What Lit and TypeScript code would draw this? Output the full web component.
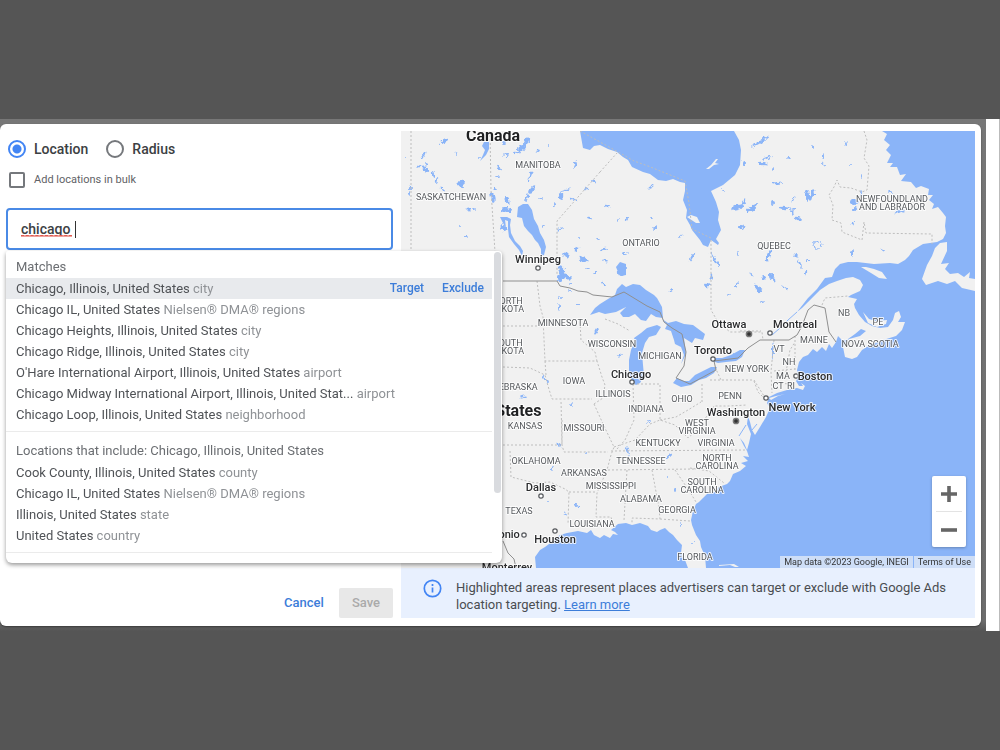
import { LitElement, html, svg, css } from "lit";
import { customElement, property, state } from "lit/decorators.js";
import { classMap } from "lit/directives/class-map.js";

type Place = { name: string; kind: string };
type Label = [string, number, number];
type Blob = [number, number, number, number, number];

const MATCHES: Place[] = [
  { name: "Chicago, Illinois, United States", kind: "city" },
  { name: "Chicago IL, United States", kind: "Nielsen® DMA® regions" },
  { name: "Chicago Heights, Illinois, United States", kind: "city" },
  { name: "Chicago Ridge, Illinois, United States", kind: "city" },
  { name: "O'Hare International Airport, Illinois, United States", kind: "airport" },
  { name: "Chicago Midway International Airport, Illinois, United Stat...", kind: "airport" },
  { name: "Chicago Loop, Illinois, United States", kind: "neighborhood" },
];

const INCLUDING: Place[] = [
  { name: "Cook County, Illinois, United States", kind: "county" },
  { name: "Chicago IL, United States", kind: "Nielsen® DMA® regions" },
  { name: "Illinois, United States", kind: "state" },
  { name: "United States", kind: "country" },
];

const REGIONS: Label[] = [
  ["SASKATCHEWAN", 451, 200], ["MANITOBA", 538, 168], ["ONTARIO", 641, 246],
  ["QUEBEC", 774, 249], ["NEWFOUNDLAND", 892, 202], ["AND LABRADOR", 892, 210],
  ["NORTH", 508, 304], ["DAKOTA", 507, 312], ["SOUTH", 508, 346], ["DAKOTA", 507, 354],
  ["MINNESOTA", 563, 326], ["WISCONSIN", 612, 347], ["MICHIGAN", 660, 359],
  ["IOWA", 574, 384], ["NEBRASKA", 515, 390], ["ILLINOIS", 613, 397],
  ["INDIANA", 646, 412], ["OHIO", 682, 402], ["KANSAS", 525, 429],
  ["MISSOURI", 584, 431], ["WEST", 697, 426], ["VIRGINIA", 697, 434],
  ["VIRGINIA", 716, 446], ["KENTUCKY", 658, 446], ["OKLAHOMA", 536, 464],
  ["TENNESSEE", 641, 464], ["NORTH", 717, 461], ["CAROLINA", 717, 469],
  ["ARKANSAS", 584, 476], ["MISSISSIPPI", 611, 489], ["SOUTH", 702, 485],
  ["CAROLINA", 702, 493], ["ALABAMA", 641, 502], ["GEORGIA", 677, 513],
  ["TEXAS", 519, 514], ["LOUISIANA", 592, 527], ["FLORIDA", 695, 560],
  ["NEW YORK", 747, 372], ["PENN", 730, 399], ["MAINE", 814, 343],
  ["NB", 844, 316], ["PE", 878, 325], ["NOVA SCOTIA", 870, 347],
  ["VT", 779, 352], ["NH", 789, 365], ["MA", 783, 379], ["CT", 778, 389], ["RI", 791, 389],
];

const CITIES: Label[] = [
  ["Winnipeg", 538, 263], ["Chicago", 631, 378], ["Ottawa", 729, 328],
  ["Montreal", 795, 328], ["Toronto", 713, 354], ["Boston", 815, 380],
  ["New York", 792, 411], ["Washington", 736, 416], ["Dallas", 541, 491],
  ["Houston", 555, 543], ["San Antonio", 490, 538], ["Monterrey", 507, 571],
];

const TOWNS: [number, number][] = [
  [538, 268], [632, 382], [770, 333], [713, 359], [796, 376],
  [766, 398], [541, 496], [555, 531], [524, 535],
];
const CAPITALS: [number, number][] = [[749, 334], [736, 421]];

const LAKES: Blob[] = [
  [444, 141, 5, 2, -25], [457, 153, 2, 1, 60], [420, 166, 1, 3, 60], [425, 169, 4, 2, 50],
  [426, 164, 2, 1, 10], [461, 183, 4, 2, -10], [437, 180, 1, 3, 10], [410, 193, 1, 2, 0],
  [411, 187, 1, 2, 20], [433, 174, 1, 3, -10], [462, 187, 2, 1, 20], [468, 209, 3, 1, 20],
  [474, 209, 2, 1, 0], [466, 237, 2, 1, 0], [461, 226, 1, 1, 0], [479, 157, 1, 1, 0],
  [406, 158, 1, 1, 0], [424, 155, 1, 3, 20], [442, 189, 3, 1, 15], [499, 168, 2, 1, 20],
  [522, 148, 5, 3, -50], [526, 142, 2, 5, 30], [517, 153, 4, 1, 10], [506, 155, 3, 1, 0],
  [504, 143, 2, 1, 0], [538, 150, 3, 1, 10], [548, 146, 1, 1, 0], [575, 165, 1, 4, 25],
  [530, 176, 1, 5, 25], [532, 190, 2, 4, 30], [527, 197, 1, 5, 15], [541, 198, 2, 1, 0],
  [565, 190, 5, 1, -15], [561, 196, 2, 3, 20], [573, 199, 4, 1, 30], [555, 205, 1, 2, 0],
  [493, 197, 2, 5, -20], [507, 200, 2, 3, -30], [506, 210, 5, 3, 10], [497, 177, 2, 1, 0],
  [495, 189, 2, 1, 10], [504, 228, 2, 4, -20], [587, 189, 2, 1, -20], [594, 182, 3, 1, 10],
  [590, 218, 3, 1, 10], [560, 229, 3, 1, -20], [579, 238, 1, 1, 0], [544, 226, 2, 1, 0],
  [566, 255, 3, 2, 30], [577, 249, 2, 3, 20], [583, 259, 5, 2, 30], [562, 272, 3, 7, -20],
  [567, 277, 4, 2, 30], [596, 272, 2, 1, 0], [587, 269, 2, 1, 0], [598, 240, 2, 1, 0],
  [622, 270, 4, 6, 10], [608, 206, 3, 1, 10], [618, 220, 1, 2, 0], [627, 219, 1, 2, 20],
  [651, 218, 2, 1, 0], [651, 187, 3, 1, -30], [655, 228, 2, 1, 0], [604, 249, 3, 1, -10],
  [605, 261, 3, 1, 20], [624, 253, 3, 1, 0], [681, 236, 3, 1, -30], [692, 257, 1, 6, 30],
  [714, 258, 1, 7, -25], [718, 264, 1, 3, 0], [744, 163, 2, 2, 0], [763, 164, 5, 2, 10],
  [767, 158, 5, 1, -20], [757, 144, 7, 1, -30], [764, 139, 5, 1, -30], [777, 183, 5, 1, -10],
  [738, 207, 7, 2, -15], [744, 202, 1, 4, 30], [752, 208, 7, 2, -30], [773, 203, 2, 2, 0],
  [784, 208, 6, 1, 5], [792, 212, 1, 4, -20], [741, 227, 3, 2, 0], [737, 253, 1, 2, 0],
  [769, 255, 2, 6, 25], [724, 190, 2, 1, 0], [773, 169, 1, 2, 0], [789, 158, 2, 1, 0],
  [796, 256, 3, 1, 20], [752, 275, 3, 1, 40], [764, 278, 3, 2, 60], [774, 280, 3, 1, 30],
  [810, 198, 5, 2, -30], [807, 196, 2, 6, 0], [813, 193, 2, 4, -10], [794, 209, 2, 1, 0],
  [798, 219, 3, 2, 20], [793, 200, 1, 3, 20], [846, 144, 1, 3, 0], [823, 156, 1, 3, 0],
  [824, 165, 2, 1, 20], [813, 147, 1, 2, 0], [854, 202, 4, 3, 10], [861, 194, 1, 3, 0],
  [862, 176, 1, 2, 0], [850, 165, 1, 1, 0], [853, 223, 2, 1, 20], [855, 209, 2, 2, 0],
  [898, 212, 5, 1, -30], [902, 211, 3, 1, 20], [883, 250, 2, 1, 30], [852, 254, 1, 4, 0],
  [800, 264, 1, 4, -20], [808, 260, 2, 1, 0], [806, 273, 1, 3, 10], [890, 192, 2, 1, 0],
  [560, 278, 3, 3, 20], [570, 291, 2, 1, 0], [558, 297, 1, 2, 0], [559, 307, 1, 3, 0],
  [578, 305, 2, 1, 0], [571, 283, 2, 1, 0], [604, 284, 2, 1, 20], [671, 291, 3, 1, -30],
  [707, 285, 3, 2, 20], [711, 277, 1, 3, 20], [758, 288, 2, 5, -40], [771, 276, 2, 3, 0],
  [785, 288, 4, 1, 30], [760, 291, 3, 2, 20], [737, 285, 1, 3, 0], [729, 295, 2, 1, 0],
  [762, 302, 2, 1, 0], [596, 331, 1, 3, 30], [620, 355, 3, 1, -20], [561, 298, 1, 1, 0],
  [545, 379, 1, 5, -30], [523, 397, 3, 1, -20], [572, 405, 1, 2, 0],
  [559, 444, 1, 3, -20], [586, 452, 1, 1, 0], [627, 450, 1, 6, -15], [669, 456, 4, 1, -30],
  [577, 505, 3, 1, 50], [566, 513, 2, 1, 30], [548, 501, 1, 1, 0], [553, 468, 1, 2, 0],
  [668, 478, 1, 1, 0], [675, 490, 1, 2, 0], [649, 422, 2, 1, 0], [681, 525, 1, 2, 0],
  [692, 544, 1, 1, 0], [734, 355, 1, 1, 0], [773, 351, 1, 9, 0],
];

const WATER: string[] = [
  // Hudson Bay and James Bay
  "M580 131 583 148 590 150 594 146 600 145 608 149 617 152 623 157 628 160 632 167 643 172 650 174 658 180 666 181 673 179 680 182 685 183 685 191 683 200 687 210 686 218 690 225 692 230 700 240 703 245 708 247 711 240 718 245 719 243 716 239 721 230 718 220 719 212 716 202 711 191 723 185 735 175 740 165 741 150 739 140 734 131Z",
  // Atlantic coast, Gulf of St. Lawrence and Gulf of Mexico
  "M882 131 887 134 884 140 890 145 886 150 891 155 887 163 893 163 890 167 897 167 900 175 906 174 901 181 911 182 916 188 921 186 929 189 928 195 933 195 929 200 934 204 932 209 938 207 943 213 946 217 945 226 946 233 943 239 937 242 923 244 913 250 909 256 905 260 898 264 890 263 874 264 857 262 848 262 840 264 835 269 832 277 825 278 817 289 808 298 797 312 802 308 808 302 820 290 829 284 837 281 846 278 853 277 860 280 863 285 860 291 851 295 848 297 857 299 854 304 855 308 859 315 865 322 872 326 880 328 888 327 893 320 895 313 899 311 901 317 898 322 905 322 902 330 896 336 880 341 870 345 862 350 857 357 852 359 845 357 843 347 849 339 860 336 866 331 861 329 855 334 848 339 843 341 838 336 836 342 832 348 829 344 826 351 822 347 817 352 813 349 808 355 803 357 799 362 797 370 799 377 796 381 799 386 803 386 801 383 805 386 803 390 797 388 787 390 777 393 769 397 767 403 770 408 766 417 760 427 755 435 752 430 750 422 748 416 747 424 751 434 749 443 747 450 744 443 740 438 744 446 747 451 749 457 743 456 748 461 741 463 746 466 740 471 733 474 730 481 727 484 719 487 715 492 708 493 703 498 699 502 696 504 693 511 691 520 692 525 696 535 700 541 701 547 705 556 706 568H975V131ZM688 568 685 560 681 553 682 545 677 540 673 535 669 532 665 528 660 530 657 532 651 530 648 526 640 523 632 525 626 523 618 524 611 530 615 532 618 535 613 534 610 538 604 535 600 538 594 535 591 530 587 533 578 531 567 533 560 535 553 541 545 547 540 550 535 557 536 568Z",
  // Lakes Superior, Michigan, Huron, Erie, Ontario
  "M590 315 595 308 600 304 608 299 615 295 617 289 622 284 626 287 633 284 640 285 646 290 654 295 657 298 662 307 663 318 656 317 651 314 646 321 641 320 635 314 629 317 623 317 620 313 626 307 616 312 605 314 599 312Z",
  "M647 328 641 333 634 338 635 341 631 350 629 360 629 372 632 382 636 385 640 383 644 376 643 365 642 353 645 343 649 337 656 335 661 327 657 325Z",
  "M662 319 667 325 665 329 671 331 674 340 675 344 681 347 684 355 681 364 686 354 684 338 692 343 695 338 703 340 705 334 697 328 693 325 684 324 676 321 668 323Z",
  "M673 383 677 378 684 381 689 381 695 375 703 371 711 367 717 367 714 373 706 378 699 380 691 385 681 387Z",
  "M712 361 716 358 722 358 731 355 740 350 745 350 742 357 736 361 726 362 718 363Z",
  // Lakes Winnipeg, Manitoba and Reindeer
  "M518 207 523 204 528 204 532 210 534 219 538 226 540 233 544 240 546 247 544 255 541 256 541 249 538 243 535 240 532 235 528 231 524 226 522 218 517 217Z",
  "M500 217 507 217 511 219 510 225 511 233 515 241 520 246 523 251 522 256 519 250 514 244 509 237 508 229 508 221 505 220 506 228 503 223Z",
  "M484 142 489 142 489 149 486 155 480 161 483 155 485 150 482 146Z",
  "M616 267 620 262 626 264 626 275 621 276 618 272Z",
];

const ISLANDS: string[] = [
  "M687 217 691 215 697 217 700 223 696 223Z",
  "M706 169 711 165 716 159 718 159 715 163 719 164 714 165 709 169Z",
  "M861 267 866 267 874 269 882 272 887 279 879 278 871 273Z",
  "M863 312 869 319 876 321 887 320 886 324 877 327 868 323Z",
  "M947 242 940 243 935 248 932 256 927 265 922 279 926 285 938 281 947 284 955 281 962 288 975 291 975 279 969 278 970 272 964 277 958 273 950 274 945 269 949 263 941 264 947 251Z",
  "M769 398 776 396 785 394 778 396 771 400Z",
  "M719 565 734 564 739 567 735 567 730 565 719 566Z",
];

const PROVINCES: string[] = [
  "M411 131V252M490 131 491 190 495 252",
  "M600 172 557 221V275",
  "M580 131 620 153 634 161 648 166 685 181 689 203 692 229 711 238V310L718 322 730 332 762 332 763 340",
  "M600 172 617 153",
  "M864 131 867 140 864 158 869 166 867 190 862 192 851 188 840 187 837 180 834 187 829 195 833 205 832 220 841 223 842 232 862 240 864 222 866 233 932 234 932 244",
  "M537 281 540 306 543 317 545 361H597L602 377 605 385 603 398 594 404M503 326H543M503 367 530 368 545 375 548 386 552 399H592M545 361 546 375",
  "M580 322 581 340 595 352 597 361M605 319 618 324 630 331M633 384H660V420M633 384 634 420 625 440 617 449M660 420 676 417 688 410 701 402M702 384V402M710 380H754L764 396",
  "M594 404 604 426 614 447 611 455 607 470 597 493 596 517H611L614 528M503 445H562L561 400M562 420V445L564 452H608M510 451 511 477 535 483 550 482 565 489 569 492 568 524M569 492H597",
  "M611 451 746 450M608 470 695 469M627 470 624 520M652 470 659 508 660 519 632 518V523M660 519 690 521M675 470 690 492 696 502M690 468 709 471 724 483M614 447 635 440 650 424 660 420 675 425 688 438 697 430 707 416 714 406 728 406 747 405",
  "M774 340 771 372 772 393M795 336V370M786 372 790 350 795 342M774 371 795 369M773 383 791 384M754 381 758 392 763 397M715 367 721 380M822 305 825 298 848 296M740 331H761",
];

const BORDER =
  "M503 281H557L560 286 570 288 578 291 587 292 593 295 612 297 624 292 647 306 660 312 664 322 672 328 682 334 686 352 684 366 676 378 690 384 703 377 716 370 714 361 738 358 748 348 760 340H789L797 335 802 326 808 310 814 305 825 308 829 332 836 342M503 541 508 553 514 559 516 568";

@customElement("coverage-map")
export class CoverageMap extends LitElement {
  static styles = css`
    :host { display: block; position: relative; overflow: hidden; background: #f1f1f1; }
    .canvas { display: block; width: 100%; height: 100%; }
    .water { fill: #8ab4f8; }
    .land { fill: #f1f1f1; }
    .line { fill: none; stroke: #bdbdbd; stroke-width: 1; stroke-dasharray: 2 2; }
    .border { fill: none; stroke: #8f8f8f; stroke-width: 1; stroke-linejoin: round; }
    .river { fill: none; stroke: #8ab4f8; stroke-width: 1; }
    .label { text-anchor: middle; paint-order: stroke; stroke: #fffc; stroke-width: 2px; stroke-linejoin: round; }
    .region { font: 400 9px Roboto, sans-serif; fill: #55585c; }
    .city { font: 500 11px Roboto, sans-serif; fill: #2b2c2e; }
    .country { font: 700 16px Roboto, sans-serif; fill: #1f2022; }
    .town { fill: #fff; stroke: #55585c; stroke-width: 1.2; }
    .capital { fill: #333; stroke: #777; stroke-width: 1.5; }
    .zoom {
      position: absolute; right: 9px; bottom: 21px; display: flex; flex-direction: column;
      width: 34px; background: #fff; border-radius: 2px; box-shadow: 0 1px 3px #0004;
    }
    .step { display: grid; place-items: center; height: 35px; padding: 0; border: 0; background: none; }
    .step svg { width: 16px; height: 16px; fill: #666; }
    .rule { height: 1px; margin: 0 4px; background: #e3e3e3; }
    .credits {
      position: absolute; right: 0; bottom: 0; display: flex; gap: 1px;
      font: 9px/12px Roboto, sans-serif; color: #333;
    }
    .credit { padding: 0 4px; background: #dfe8f6cc; color: inherit; text-decoration: none; }
  `;

  render() {
    return html`
      <svg class="canvas" viewBox="401 131 574 437" preserveAspectRatio="xMidYMid slice" role="img" aria-label="Map of eastern North America">
        <filter id="ragged">
          <feTurbulence type="fractalNoise" baseFrequency="0.25" numOctaves="2" seed="4"></feTurbulence>
          <feDisplacementMap in="SourceGraphic" scale="6" xChannelSelector="R" yChannelSelector="G"></feDisplacementMap>
        </filter>
        ${WATER.map((d) => svg`<path class="water" d=${d}></path>`)}
        ${ISLANDS.map((d) => svg`<path class="land" d=${d}></path>`)}
        <g filter="url(#ragged)">
          ${LAKES.map(([x, y, rx, ry, turn]) => svg`<ellipse class="water" cx=${x} cy=${y} rx=${rx} ry=${ry} transform=${`rotate(${turn} ${x} ${y})`}></ellipse>`)}
          <circle class="river" cx="818" cy="245" r="4"></circle>
        </g>
        <path class="river" d="M797 312 788 320 780 328 772 335M746 425 739 436M752 430 757 424"></path>
        ${PROVINCES.map((d) => svg`<path class="line" d=${d}></path>`)}
        <path class="border" d=${BORDER}></path>
        ${TOWNS.map(([x, y]) => svg`<circle class="town" cx=${x} cy=${y} r="2.2"></circle>`)}
        ${CAPITALS.map(([x, y]) => svg`<circle class="capital" cx=${x} cy=${y} r="2.6"></circle>`)}
        ${REGIONS.map(([t, x, y]) => svg`<text class="label region" x=${x} y=${y}>${t}</text>`)}
        ${CITIES.map(([t, x, y]) => svg`<text class="label city" x=${x} y=${y}>${t}</text>`)}
        <text class="label country" x="493" y="141">Canada</text>
        <text class="label country" x="493" y="416">United States</text>
      </svg>
      <div class="zoom">
        <button class="step" aria-label="Zoom in"><svg viewBox="0 0 16 16"><path d="M6.2 0h3.6v6.2H16v3.6H9.8V16H6.2V9.8H0V6.2h6.2z"></path></svg></button>
        <div class="rule"></div>
        <button class="step" aria-label="Zoom out"><svg viewBox="0 0 16 16"><path d="M0 6.2h16v3.6H0z"></path></svg></button>
      </div>
      <div class="credits">
        <span class="credit">Map data ©2023 Google, INEGI</span>
        <a class="credit" href="#terms">Terms of Use</a>
      </div>
    `;
  }
}

@customElement("place-list")
export class PlaceList extends LitElement {
  @property() heading = "";
  @property({ attribute: false }) places: Place[] = [];
  @property({ type: Number }) active = -1;

  static styles = css`
    :host { display: block; padding-bottom: 6px; border-bottom: 1px solid #ebebeb; }
    .heading { margin: 0; padding: 0 10px; font: 400 13px/23px Roboto, sans-serif; color: #6b6e72; }
    .items { margin: 0; padding: 0; list-style: none; font-size: 13px; }
    .item { display: flex; align-items: center; padding: 0 8px 0 10px; line-height: 21px; }
    .item.active { background: #e8eaed; }
    .name { flex: 1; white-space: nowrap; color: #505357; }
    .kind { color: #8f9296; }
    .action { margin-left: 18px; padding: 0; border: 0; background: none; font: 500 12px/21px Roboto, sans-serif; color: #3c7dd9; }
  `;

  render() {
    return html`
      <h3 class="heading">${this.heading}</h3>
      <ul class="items">
        ${this.places.map((p, i) => html`
          <li class=${classMap({ item: true, active: i === this.active })}>
            <span class="name">${p.name} <span class="kind">${p.kind}</span></span>
            ${i === this.active
              ? html`<button class="action">Target</button><button class="action">Exclude</button>`
              : null}
          </li>`)}
      </ul>
    `;
  }
}

@customElement("app-root")
export class AppRoot extends LitElement {
  @state() private query = "chicago ";

  static styles = css`
    :host {
      display: flex; flex-direction: column; justify-content: center; min-height: 100vh;
      background: #555; font: 12px/16px Roboto, sans-serif; color: #3c4043;
    }
    * { box-sizing: border-box; }
    .stage { display: flex; background: linear-gradient(#777, #6c6c6c 98%, #555); }
    .gutter { width: 14px; background: #fff; border-right: 1px solid #bbb; }
    .dialog {
      flex: 1; display: grid; grid-template-columns: minmax(0, 401fr) minmax(0, 574fr);
      margin: 5px 5px 5px 0; padding: 7px 6px 8px 0; background: #fff; border-radius: 6px;
      box-shadow: 0 1px 2px #0006;
    }
    .form { display: flex; flex-direction: column; padding: 0 8px 0 6px; }
    .modes { display: flex; gap: 16px; }
    .choice { display: flex; align-items: center; gap: 8px; height: 36px; padding-left: 2px; font-size: 14px; font-weight: 500; }
    .bulk { display: flex; align-items: center; gap: 9px; height: 26px; padding-left: 3px; font-size: 11px; color: #5f6266; }
    .radio, .tick { appearance: none; flex: none; margin: 0; background: #fff; border: 2px solid #75787c; }
    .radio { width: 18px; height: 18px; border-radius: 50%; }
    .radio:checked { border-color: #4285f4; background: radial-gradient(circle, #4285f4 4px, #fff 5px); }
    .tick { width: 16px; height: 16px; border-radius: 2px; }
    .search { position: relative; margin-top: 15px; }
    .query {
      display: block; width: 100%; height: 42px; padding: 0 13px; border: 2px solid #4a8ae6;
      border-radius: 4px; outline: 0; background: #fff; color: #3c4043;
      font: 500 14px/20px Roboto, sans-serif;
    }
    .squiggle { position: absolute; left: 15px; top: 27px; width: 51px; height: 2px; border-top: 1px dashed #e05a50; background: #eea29c; }
    .caret { position: absolute; left: 69px; top: 13px; width: 1px; height: 17px; background: #333; }
    .menu {
      position: absolute; z-index: 1; left: 0; top: 43px; display: flex; width: 496px; height: 312px;
      background: #fff; border-radius: 2px 4px 6px 6px; box-shadow: 0 2px 4px #0006;
    }
    .groups { flex: 1; display: flex; flex-direction: column; gap: 7px; padding-top: 4px; overflow: hidden; }
    .rail { width: 10px; padding: 1px 1px 0 2px; }
    .thumb { height: 241px; border-radius: 4px; background: #d9dbdf; }
    .actions { display: flex; justify-content: flex-end; gap: 15px; margin-top: auto; }
    .cancel, .save { height: 30px; border: 0; font: 500 13px/16px Roboto, sans-serif; }
    .cancel { padding: 0; background: none; color: #3c7dd9; }
    .save { padding: 0 13px; border-radius: 2px; background: #e8e8e8; color: #aaa; }
    .map { display: flex; flex-direction: column; }
    .chart { aspect-ratio: 574 / 437; }
    .notice { display: flex; gap: 14px; flex: 1; padding: 11px 24px 5px 22px; background: #e8f0fe; color: #4a4d51; }
    .info { flex: none; width: 19px; height: 19px; }
    .copy { margin: 0; font-size: 13px; line-height: 17px; }
    .more { color: #3c7dd9; }
  `;

  render() {
    return html`
      <main class="stage">
        <section class="dialog">
          <form class="form" @submit=${(e: Event) => e.preventDefault()}>
            <div class="modes">
              <label class="choice"><input class="radio" type="radio" name="mode" checked />Location</label>
              <label class="choice"><input class="radio" type="radio" name="mode" />Radius</label>
            </div>
            <label class="bulk"><input class="tick" type="checkbox" />Add locations in bulk</label>
            <div class="search">
              <input class="query" type="text" aria-label="Enter a location" .value=${this.query}
                @input=${(e: Event) => (this.query = (e.target as HTMLInputElement).value)} />
              <span class="squiggle"></span><span class="caret"></span>
              <div class="menu">
                <div class="groups">
                  <place-list heading="Matches" .places=${MATCHES} active="0"></place-list>
                  <place-list heading="Locations that include: Chicago, Illinois, United States" .places=${INCLUDING}></place-list>
                </div>
                <div class="rail"><div class="thumb"></div></div>
              </div>
            </div>
            <div class="actions">
              <button class="cancel" type="button">Cancel</button>
              <button class="save" type="submit" disabled>Save</button>
            </div>
          </form>
          <div class="map">
            <coverage-map class="chart"></coverage-map>
            <aside class="notice">
              <svg class="info" viewBox="0 0 19 19" fill="none" stroke="#4285f4" stroke-width="1.7" aria-hidden="true">
                <circle cx="9.5" cy="9.5" r="8.2"></circle><path d="M9.5 8.5v5M9.5 5v2"></path>
              </svg>
              <p class="copy">Highlighted areas represent places advertisers can target or exclude with Google Ads location targeting. <a class="more" href="#learn">Learn more</a></p>
            </aside>
          </div>
        </section>
        <div class="gutter"></div>
      </main>
    `;
  }
}
